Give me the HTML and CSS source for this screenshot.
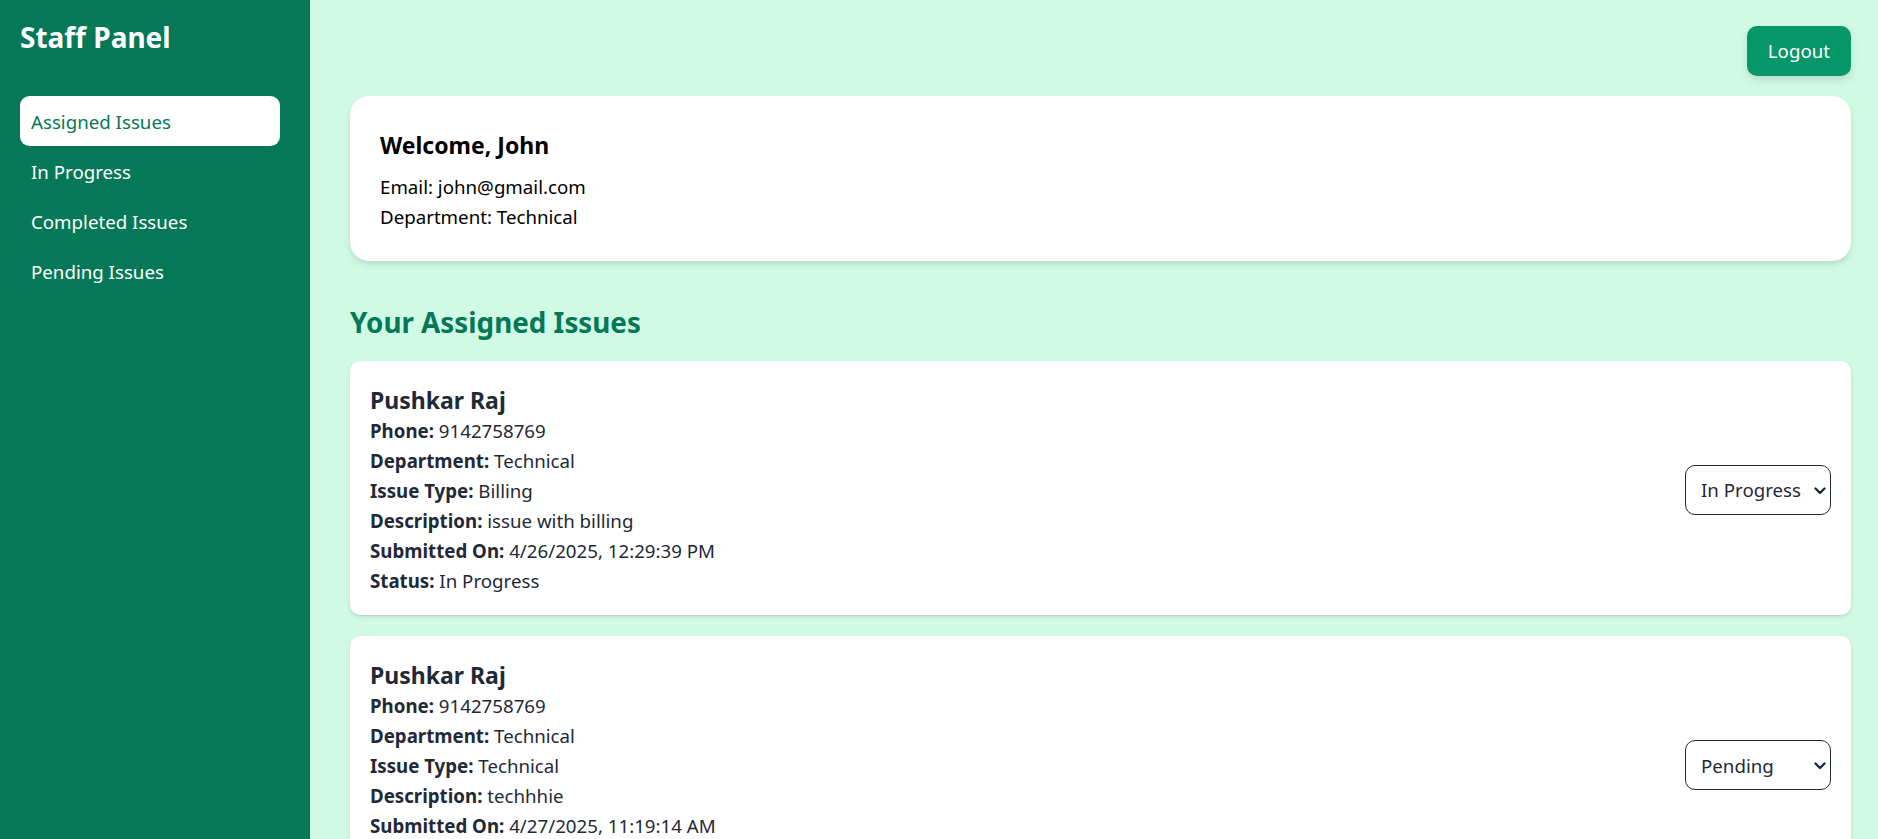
FILE: index.html
```html
<!DOCTYPE html>
<html lang="en">
<head>
<meta charset="utf-8">
<title>Staff Panel</title>
<link rel="stylesheet" href="styles.css">
</head>
<body>
<div class="layout">
  <aside class="sidebar">
    <h1 class="brand">Staff Panel</h1>
    <nav class="nav">
      <a class="nav-item active" href="#">Assigned Issues</a>
      <a class="nav-item" href="#">In Progress</a>
      <a class="nav-item" href="#">Completed Issues</a>
      <a class="nav-item" href="#">Pending Issues</a>
    </nav>
  </aside>
  <main class="main">
    <div class="topbar">
      <button class="logout">Logout</button>
    </div>
    <section class="welcome">
      <h2 class="welcome-title">Welcome, John</h2>
      <p class="welcome-line">Email: john@gmail.com</p>
      <p class="welcome-line">Department: Technical</p>
    </section>
    <h2 class="section-title">Your Assigned Issues</h2>
    <div class="issues">
      <article class="issue">
        <div class="issue-info">
          <h3 class="issue-name">Pushkar Raj</h3>
          <p class="issue-line"><b>Phone:</b> 9142758769</p>
          <p class="issue-line"><b>Department:</b> Technical</p>
          <p class="issue-line"><b>Issue Type:</b> Billing</p>
          <p class="issue-line"><b>Description:</b> issue with billing</p>
          <p class="issue-line"><b>Submitted On:</b> 4/26/2025, 12:29:39 PM</p>
          <p class="issue-line"><b>Status:</b> In Progress</p>
        </div>
        <div class="select-wrap">
          <select class="status-select">
            <option>Pending</option>
            <option selected>In Progress</option>
            <option>Completed</option>
          </select>
          <svg class="chevron" width="12" height="8" viewBox="0 0 12 8"><path d="M1.5 1.5 L6 6 L10.5 1.5" fill="none" stroke="#1f2937" stroke-width="2.4" stroke-linecap="round" stroke-linejoin="round"/></svg>
        </div>
      </article>
      <article class="issue">
        <div class="issue-info">
          <h3 class="issue-name">Pushkar Raj</h3>
          <p class="issue-line"><b>Phone:</b> 9142758769</p>
          <p class="issue-line"><b>Department:</b> Technical</p>
          <p class="issue-line"><b>Issue Type:</b> Technical</p>
          <p class="issue-line"><b>Description:</b> techhhie</p>
          <p class="issue-line"><b>Submitted On:</b> 4/27/2025, 11:19:14 AM</p>
          <p class="issue-line"><b>Status:</b> Pending</p>
        </div>
        <div class="select-wrap">
          <select class="status-select">
            <option selected>Pending</option>
            <option>In Progress</option>
            <option>Completed</option>
          </select>
          <svg class="chevron" width="12" height="8" viewBox="0 0 12 8"><path d="M1.5 1.5 L6 6 L10.5 1.5" fill="none" stroke="#1f2937" stroke-width="2.4" stroke-linecap="round" stroke-linejoin="round"/></svg>
        </div>
      </article>
    </div>
  </main>
</div>
</body>
</html>
```
FILE: styles.css
```css
* { box-sizing: border-box; }
html, body { margin: 0; padding: 0; }
body {
  font-family: "Noto Sans", "Open Sans", sans-serif;
  font-size: 18.7px;
  color: #000;
}
.layout {
  display: flex;
  height: 100vh;
  overflow: hidden;
}
.sidebar {
  width: 310px;
  flex-shrink: 0;
  background: #047857;
  color: #fff;
  padding: 20px 30px 20px 20px;
}
.brand {
  margin: 0 0 42px 0;
  font-size: 28px;
  line-height: 34px;
  font-weight: 700;
}
.nav {
  display: flex;
  flex-direction: column;
}
.nav-item {
  display: block;
  color: #fff;
  text-decoration: none;
  font-size: 18.7px;
  line-height: 28px;
  padding: 12px 11px 10px 11px;
  border-radius: 9.6px;
}
.nav-item.active {
  background: #fff;
  color: #047857;
}
.main {
  flex: 1;
  background: #d1fae5;
  padding: 26px 27px 40px 40px;
  overflow-y: auto;
  scrollbar-width: none;
}
.topbar {
  display: flex;
  justify-content: flex-end;
  margin-bottom: 20px;
}
.logout {
  font-family: inherit;
  font-size: 18.7px;
  line-height: 28px;
  padding: 11px 21px;
  color: #fff;
  background: #059669;
  border: none;
  border-radius: 10px;
  box-shadow: 0 4px 8px rgba(0, 0, 0, 0.12);
}
.welcome {
  background: #fff;
  border-radius: 19px;
  padding: 29px 30px 29.5px 30px;
  box-shadow: 0 4px 7px rgba(0, 0, 0, 0.08), 0 2px 4px rgba(0, 0, 0, 0.05);
}
.welcome-title {
  margin: 0 0 7px 0;
  font-size: 23px;
  line-height: 40px;
  font-weight: 700;
}
.welcome-line {
  margin: 0;
  line-height: 29.5px;
}
.section-title {
  margin: 40px 0 17px 0;
  font-size: 27.8px;
  line-height: 43.2px;
  font-weight: 700;
  color: #047857;
}
.issues {
  display: flex;
  flex-direction: column;
  gap: 21px;
}
.issue {
  display: flex;
  align-items: center;
  justify-content: space-between;
  background: #fff;
  border-radius: 10px;
  padding: 23px 20px 19px 20px;
  color: #1f2937;
  box-shadow: 0 2px 4px rgba(0, 0, 0, 0.1), 0 1px 2px rgba(0, 0, 0, 0.06);
}
.issue-name {
  margin: 0;
  font-size: 23px;
  line-height: 32.2px;
  font-weight: 700;
}
.issue-line {
  margin: 0;
  line-height: 30px;
}
.issue-line b { font-weight: 700; }
.select-wrap {
  position: relative;
  width: 146px;
  height: 50px;
}
.status-select {
  appearance: none;
  -webkit-appearance: none;
  width: 146px;
  height: 50px;
  font-family: inherit;
  font-size: 18.7px;
  color: #1f2937;
  background: #fff;
  border: 1px solid #1f2937;
  border-radius: 10px;
  padding: 0 28px 0 15px;
}
.chevron {
  position: absolute;
  right: 5px;
  top: 22px;
  pointer-events: none;
}
```
